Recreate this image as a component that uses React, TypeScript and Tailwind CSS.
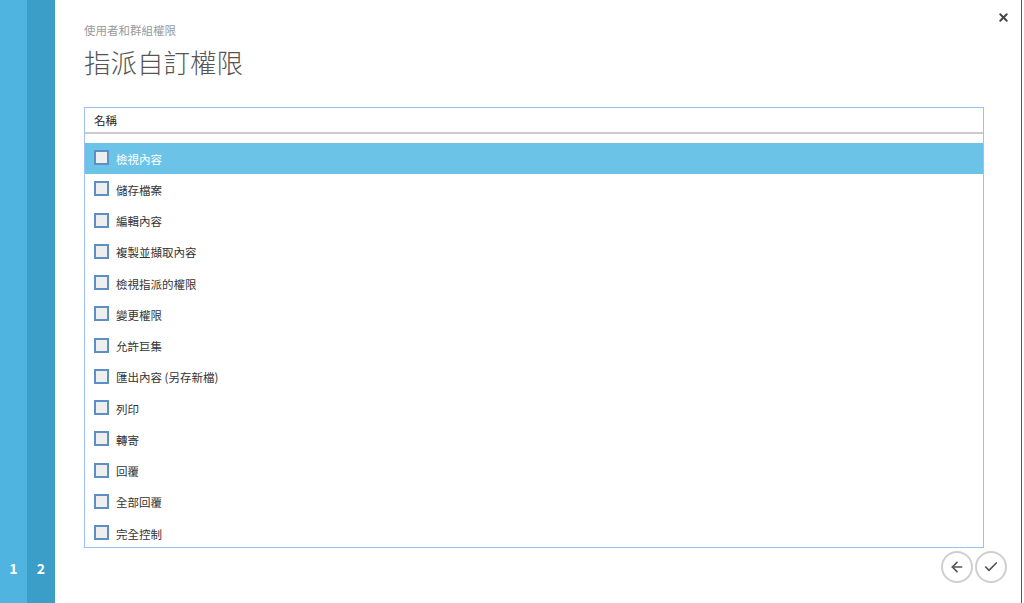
import React from 'react';
import { X, ArrowLeft, Check } from 'lucide-react';

const PERMISSIONS = [
  '檢視內容',
  '儲存檔案',
  '編輯內容',
  '複製並擷取內容',
  '檢視指派的權限',
  '變更權限',
  '允許巨集',
  '匯出內容 (另存新檔)',
  '列印',
  '轉寄',
  '回覆',
  '全部回覆',
  '完全控制',
];

const FONT = "font-['Noto_Sans_CJK_TC','Liberation_Sans',sans-serif]";

export default function App() {
  return (
    <div className={`flex h-[603px] w-[1024px] overflow-hidden bg-white ${FONT}`}>
      {/* step rail */}
      <div className="flex h-full">
        <div className="flex w-[27px] flex-col justify-end bg-[#4fb4e0] pb-[24px] text-center text-[14px] font-bold text-white">1</div>
        <div className="flex w-[28px] flex-col justify-end bg-[#3a9ec8] pb-[24px] text-center text-[14px] font-bold text-white">2</div>
      </div>

      {/* dialog body */}
      <div className="relative flex flex-1 flex-col pl-[29px] pr-[36px]">
        <p className="mt-[22px] text-[11.5px] leading-[16px] text-[#9a9a9a]">使用者和群組權限</p>
        <h1 className="mt-[7px] text-[26.5px] font-light leading-[34px] text-[#555]">指派自訂權限</h1>

        <button className="absolute right-[11px] top-[11px] text-[#444]">
          <X size={13} strokeWidth={3.5} />
        </button>

        <div className="mt-[28px] h-[441px] w-[900px] overflow-hidden border border-[#9ebff5]">
          <div className="h-[24px] pl-[9px] text-[11.5px] leading-[24px] text-[#222]">名稱</div>
          <div className="h-[2px] bg-[#cbcbcb]" />
          <div className="h-[9px]" />
          {PERMISSIONS.map((p, i) => (
            <div
              key={p}
              className={`flex h-[31.25px] items-center pl-[9px] ${i === 0 ? 'bg-[#6bc4e8] text-white' : 'text-[#333]'}`}
            >
              <span className="mb-[2px] mr-[7px] h-[15px] w-[15px] border-2 border-[#5b8fc5] bg-[#eeeeee]" />
              <span className="text-[11.5px] leading-[16px]">{p}</span>
            </div>
          ))}
        </div>

        <div className="-mr-[22px] mt-[3px] flex justify-end gap-[2px]">
          <button className="flex h-[32px] w-[32px] items-center justify-center rounded-full border-2 border-[#cfcfcf] text-[#555]">
            <ArrowLeft size={16} strokeWidth={2.5} />
          </button>
          <button className="flex h-[32px] w-[32px] items-center justify-center rounded-full border-2 border-[#cfcfcf] text-[#555]">
            <Check size={16} strokeWidth={2.5} />
          </button>
        </div>
      </div>

      {/* window edge */}
      <div className="w-px bg-[#555]" />
      <div className="w-[2px] bg-white" />
    </div>
  );
}
